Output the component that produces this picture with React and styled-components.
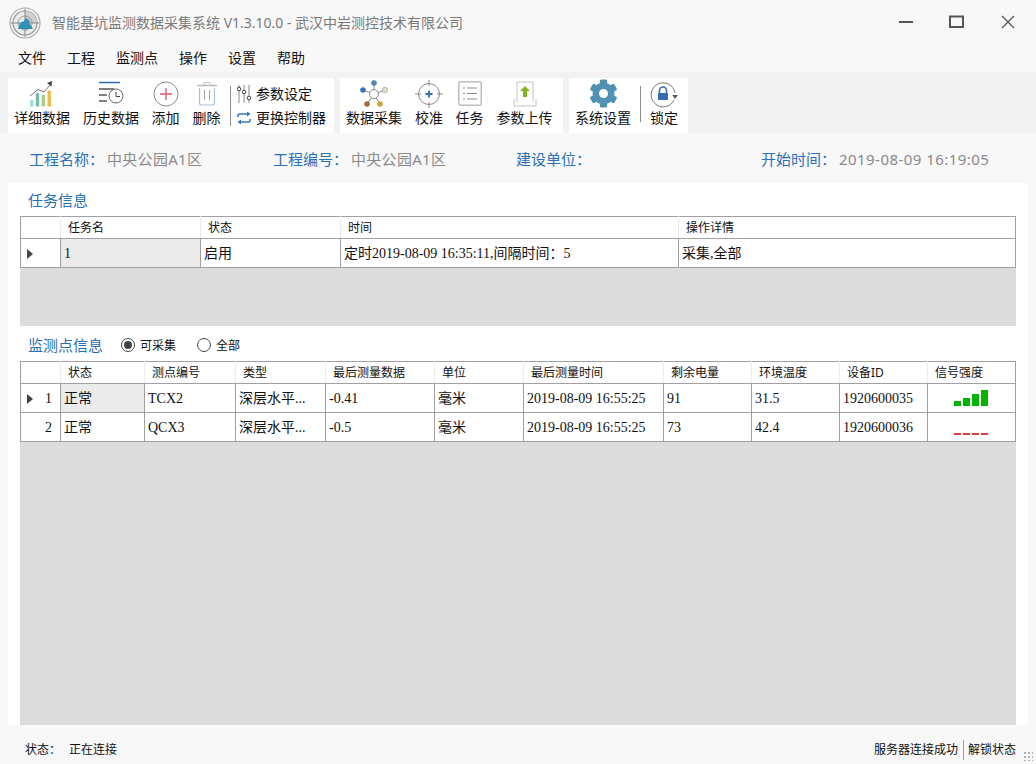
import React from 'react';
import styled, { createGlobalStyle } from 'styled-components';
import { FaCog } from 'react-icons/fa';

const GlobalStyle = createGlobalStyle`
    html, body {
        margin: 0;
        padding: 0;
        background: #f8f8f8;
    }
    * {
        box-sizing: border-box;
    }
`

const UI_FONT = `"Noto Sans", "Noto Sans CJK SC", sans-serif`;
const CELL_FONT = `"Liberation Serif", "Noto Sans CJK SC", serif`;

const Window = styled.div`
    width: 1036px;
    height: 764px;
    display: flex;
    flex-direction: column;
    overflow: hidden;
    background: #f8f8f8;
    font-family: ${UI_FONT};
    color: #111;
`

const TitleBar = styled.div`
    height: 44px;
    flex: none;
    display: flex;
    align-items: center;
    padding: 0 0 0 9px;
`

const LogoBox = styled.div`
    display: flex;
    margin-top: 2px;
`

const TitleText = styled.div`
    flex: 1;
    margin: 2px 0 0 11px;
    font-size: 14px;
    color: #7a7a7a;
    line-height: 20px;
`

const WindowButton = styled.div`
    width: ${props => props.$width}px;
    height: 44px;
    display: flex;
    align-items: center;
    justify-content: center;
    margin-right: ${props => props.$last ? '3px' : '0'};
`

const MenuBar = styled.div`
    height: 28px;
    flex: none;
    display: flex;
    padding: 0 0 2px 18px;
    gap: 21px;
    align-items: center;
    font-size: 14px;
`

const ToolStrip = styled.div`
    height: 61px;
    flex: none;
    background: #f2f2f2;
    display: flex;
    gap: 6px;
    padding: 6px 8px 0;
`

const ToolGroup = styled.div`
    width: ${props => props.$width}px;
    height: 55px;
    background: #fff;
    display: flex;
    padding-left: ${props => props.$pad || 0}px;
`

const ToolButton = styled.div`
    width: ${props => props.$width}px;
    flex: none;
    display: flex;
    flex-direction: column;
    align-items: center;
    font-size: 14px;
    line-height: 18px;
    white-space: nowrap;
`

const ToolIcon = styled.div`
    height: 31px;
    display: flex;
    align-items: center;
    justify-content: center;
`

const ToolSep = styled.div`
    width: 1px;
    height: ${props => props.$h || 40}px;
    background: #8a8a8a;
    margin: 8px ${props => props.$right}px 0 ${props => props.$left}px;
`

const SideTools = styled.div`
    display: flex;
    flex-direction: column;
    gap: 4px;
    padding-top: 6px;
    font-size: 14px;
`

const SideTool = styled.div`
    display: flex;
    align-items: center;
    gap: 5px;
    height: 20px;
    line-height: 16px;
    white-space: nowrap;
`

const InfoRow = styled.div`
    height: 50px;
    flex: none;
    display: grid;
    grid-template-columns: 244px 243px 245px auto;
    padding: 1px 0 0 29px;
    align-items: center;
    font-size: 15px;
    line-height: 20px;
`

const InfoItem = styled.div`
    display: flex;
    white-space: nowrap;
`

const InfoLabel = styled.span`
    width: 78px;
    color: #2b70b4;
`

const InfoValue = styled.span`
    color: #8a8a8a;
    letter-spacing: ${props => props.$spaced ? '0.45px' : '0.3px'};
`

const Panel = styled.div`
    flex: 1;
    margin: 0 8px;
    padding: 0 12px;
    background: #fff;
    display: flex;
    flex-direction: column;
`

const SectionHead = styled.div`
    height: ${props => props.$height}px;
    flex: none;
    display: flex;
    align-items: center;
    padding: ${props => props.$top || 0}px 0 0 8px;
    font-size: 12px;
`

const SectionTitle = styled.span`
    font-size: 15px;
    color: #2b70b4;
    margin-right: 18px;
`

const Radio = styled.span`
    width: 14px;
    height: 14px;
    border-radius: 50%;
    border: 1px solid #444;
    display: flex;
    align-items: center;
    justify-content: center;
    margin-right: 5px;
    &::after {
        content: "";
        width: 8px;
        height: 8px;
        border-radius: 50%;
        background: ${props => props.$on ? '#444' : 'transparent'};
    }
`

const RadioLabel = styled.span`
    margin-right: ${props => props.$gap || 0}px;
`

const GridArea = styled.div`
    flex: ${props => props.$grow ? 1 : 'none'};
    height: ${props => props.$height ? props.$height + 'px' : 'auto'};
    background: #dcdcdc;
`

const Table = styled.table`
    width: 995px;
    table-layout: fixed;
    border-collapse: collapse;
    background: #fff;
`

const HeadCell = styled.th`
    height: 22px;
    padding: 0 0 0 7px;
    border-top: 1px solid #a0a0a0;
    border-bottom: 1px solid #a0a0a0;
    border-left: 1px solid #ececec;
    border-right: 1px solid #ececec;
    font-family: ${UI_FONT};
    font-size: 12px;
    line-height: 16px;
    font-weight: 400;
    text-align: left;
    white-space: nowrap;
    &:first-child {
        border-left: 1px solid #a0a0a0;
    }
    &:last-child {
        border-right: 1px solid #a0a0a0;
    }
`

const Cell = styled.td`
    height: 29px;
    padding: 2px 0 0 3px;
    border: 1px solid #a0a0a0;
    font-family: ${CELL_FONT};
    font-size: 14px;
    line-height: 16px;
    white-space: nowrap;
    overflow: hidden;
    background: ${props => props.$current ? '#ebebeb' : '#fff'};
`

const RowHead = styled.td`
    height: 29px;
    padding: 2px 8px 0 7px;
    border: 1px solid #a0a0a0;
    font-family: ${CELL_FONT};
    font-size: 14px;
    line-height: 16px;
    text-align: right;
    position: relative;
`

const RowMarker = styled.span`
    position: absolute;
    left: 6px;
    top: 10px;
    border-left: 6px solid #444;
    border-top: 5px solid transparent;
    border-bottom: 5px solid transparent;
`

const Signal = styled.div`
    display: flex;
    align-items: flex-end;
    justify-content: center;
    gap: 2px;
    height: 17px;
    margin: -3px 0 0 -5px;
`

const Bar = styled.span`
    width: 7px;
    height: ${props => props.$h}px;
    background: ${props => props.$color};
`

const StatusBar = styled.div`
    height: 39px;
    flex: none;
    display: flex;
    align-items: center;
    padding: 11px 0 0 25px;
    font-size: 12px;
    line-height: 16px;
    position: relative;
`

const StatusLabel = styled.span`
    width: 44px;
`

const StatusText = styled.span`
    flex: 1;
`

const StatusDivider = styled.span`
    width: 1px;
    height: 20px;
    background: #a0a0a0;
    margin: 0 4px 0 5px;
`

const StatusEnd = styled.span`
    margin-right: 20px;
`

const Grip = styled.div`
    position: absolute;
    right: 3px;
    bottom: 3px;
    width: 10px;
    height: 10px;
    background-image: radial-gradient(#b0b0b0 1px, transparent 1.2px);
    background-size: 4px 4px;
`

function Logo() {
    return (
        <svg width="32" height="32" viewBox="0 0 32 32">
            <circle cx="16" cy="16" r="15" fill="#f2f2f2" stroke="#aaa" strokeWidth="1.2" />
            <circle cx="16" cy="16" r="12" fill="#ececec" stroke="#999" strokeWidth="1.2" />
            <path d="M16 4a12 12 0 0 1 12 12H16z" fill="#d0d0d0" />
            <circle cx="16" cy="16" r="7" fill="none" stroke="#999" />
            <path d="M16 2v28M2 16h28" stroke="#888" />
            <path d="M9 22l2-6 4-2 2-3 3 2 1 4 3 5z" fill="#2f93b5" />
        </svg>
    );
}

function ChartIcon() {
    return (
        <svg width="24" height="26" viewBox="0 0 24 26">
            <path d="M0 15l8-6.5 6 2.5 6-7" fill="none" stroke="#777" />
            <path d="M17 2l5-2-.5 5.5z" fill="#444" />
            <rect x="0" y="19" width="3.4" height="6.5" fill="#a5dbe5" />
            <rect x="5.8" y="12" width="3.4" height="13.5" fill="#7cb9b0" />
            <rect x="11.6" y="14" width="3.4" height="11.5" fill="#a9cf87" />
            <rect x="17.5" y="9.5" width="3.4" height="16" fill="#eebb4e" />
        </svg>
    );
}

function HistoryIcon() {
    return (
        <svg width="26" height="26" viewBox="0 0 26 26">
            <path d="M1 1.5h21" stroke="#2d6cb0" strokeWidth="1.5" />
            <path d="M1 8h15M1 14h8M1 20h8" stroke="#555" strokeWidth="1.5" />
            <circle cx="18" cy="15" r="7" fill="#fff" stroke="#666" />
            <path d="M18 11v4.5h4" fill="none" stroke="#444" />
        </svg>
    );
}

function AddIcon() {
    return (
        <svg width="26" height="26" viewBox="0 0 26 26">
            <circle cx="13" cy="13" r="12" fill="none" stroke="#8a8a8a" />
            <path d="M13 7v12M7 13h12" stroke="#d9566c" strokeWidth="1.3" />
        </svg>
    );
}

function TrashIcon() {
    return (
        <svg width="22" height="26" viewBox="0 0 22 26">
            <path d="M1 4.5h20" stroke="#b8b8b8" strokeWidth="1.5" />
            <path d="M8 4V1.5h6V4" fill="none" stroke="#c4c4c4" />
            <path d="M3.5 7v15a2 2 0 0 0 2 2h11a2 2 0 0 0 2-2V7" fill="none" stroke="#a9c4e0" strokeWidth="1.2" />
            <path d="M8.5 9v10M13.5 9v10" stroke="#a0a0a0" />
        </svg>
    );
}

function SlidersIcon() {
    return (
        <svg width="14" height="18" viewBox="0 0 14 18">
            <path d="M2 0v18M7 0v18M12 0v18" stroke="#888" />
            <circle cx="2" cy="4" r="1.8" fill="#fff" stroke="#444" />
            <circle cx="7" cy="7" r="1.8" fill="#fff" stroke="#444" />
            <circle cx="12" cy="13" r="1.8" fill="#fff" stroke="#444" />
        </svg>
    );
}

function SwapIcon() {
    return (
        <svg width="14" height="14" viewBox="0 0 14 14">
            <path d="M1 6V4.5A1.5 1.5 0 0 1 2.5 3H11" fill="none" stroke="#2f78c0" strokeWidth="1.6" />
            <path d="M10 0.5l3.5 2.5L10 5.5z" fill="#2f78c0" />
            <path d="M13 8v1.5a1.5 1.5 0 0 1-1.5 1.5H3" fill="none" stroke="#2f78c0" strokeWidth="1.6" />
            <path d="M4 8.5L0.5 11 4 13.5z" fill="#2f78c0" />
        </svg>
    );
}

function NodesIcon() {
    return (
        <svg width="28" height="28" viewBox="0 0 28 28">
            <path d="M14 5v9M3 10l11 4M25 10l-11 4M7 24l7-10M20 24l-6-10" stroke="#8a8a8a" />
            <circle cx="14" cy="14" r="4.5" fill="#fff" stroke="#8a8a8a" />
            <circle cx="14" cy="3" r="2.8" fill="#4f8aa5" />
            <circle cx="3" cy="10" r="2.8" fill="#3a72c0" />
            <circle cx="25" cy="10" r="2.8" fill="#e4dccb" stroke="#888" strokeWidth="0.5" />
            <circle cx="7" cy="24" r="2.8" fill="#a86a42" />
            <circle cx="20" cy="24" r="2.8" fill="#d0a434" />
        </svg>
    );
}

function TargetIcon() {
    return (
        <svg width="28" height="28" viewBox="0 0 28 28">
            <circle cx="14" cy="14" r="10.5" fill="none" stroke="#8a8a8a" />
            <path d="M14 0v6M14 22v6M0 14h6M22 14h6" stroke="#8a8a8a" />
            <path d="M14 10.5v7M10.5 14h7" stroke="#2f6fc0" strokeWidth="1.8" />
        </svg>
    );
}

function ListIcon() {
    return (
        <svg width="24" height="25" viewBox="0 0 24 25">
            <rect x="0.75" y="0.75" width="22.5" height="23.5" rx="2" fill="none" stroke="#bdbdbd" strokeWidth="1.5" />
            <path d="M9 7h10M9 12.5h10M9 18h10" stroke="#8a8a8a" />
            <path d="M5 7h2M5 12.5h2M5 18h2" stroke="#8a8a8a" />
        </svg>
    );
}

function UploadIcon() {
    return (
        <svg width="24" height="26" viewBox="0 0 24 26">
            <path d="M1 18v7h22v-7" fill="none" stroke="#c4c4c4" />
            <path d="M4 21V1h16v20" fill="#fff" stroke="#c4c4c4" />
            <path d="M12 5l5 5h-3v6h-4v-6H7z" fill="#7fb51e" />
        </svg>
    );
}

function LockIcon() {
    return (
        <svg width="28" height="28" viewBox="0 0 28 28">
            <path d="M25 13A12 12 0 1 0 24 20" fill="none" stroke="#777" />
            <path d="M22.2 15h5.6l-2.8 4z" fill="#555" />
            <path d="M9.5 13V10.5a3.5 3.5 0 0 1 7 0V13" fill="none" stroke="#3569b5" strokeWidth="1.6" />
            <rect x="8" y="13" width="10" height="7" rx="0.8" fill="#3569b5" />
        </svg>
    );
}

const menus = ['文件', '工程', '监测点', '操作', '设置', '帮助'];

const taskCols = [40, 140, 140, 338, 337];
const taskHeads = ['', '任务名', '状态', '时间', '操作详情'];

const pointCols = [40, 84, 91, 90, 109, 89, 140, 88, 88, 88, 88];
const pointHeads = ['', '状态', '测点编号', '类型', '最后测量数据', '单位', '最后测量时间', '剩余电量', '环境温度', '设备ID', '信号强度'];
const points = [
    { no: 1, state: '正常', code: 'TCX2', type: '深层水平...', value: '-0.41', time: '2019-08-09 16:55:25', power: '91', temp: '31.5', id: '1920600035', good: true },
    { no: 2, state: '正常', code: 'QCX3', type: '深层水平...', value: '-0.5', time: '2019-08-09 16:55:25', power: '73', temp: '42.4', id: '1920600036', good: false },
];

function Columns({ widths }) {
    return (
        <colgroup>
            {widths.map((w, i) => <col key={i} width={w} />)}
        </colgroup>
    );
}

function SignalBars({ good }) {
    if (good) {
        return (
            <Signal>
                {[5, 8, 12, 16].map(h => <Bar key={h} $h={h} $color="#00b400" />)}
            </Signal>
        );
    }
    return (
        <Signal>
            {[0, 1, 2, 3].map(i => <Bar key={i} $h={2} $color="#e2403c" />)}
        </Signal>
    );
}

function App() {
    return (
        <Window>
            <GlobalStyle />
            <TitleBar>
                <LogoBox><Logo /></LogoBox>
                <TitleText>智能基坑监测数据采集系统 V1.3.10.0 - 武汉中岩测控技术有限公司</TitleText>
                <WindowButton $width={49}>
                    <svg width="16" height="16" viewBox="0 0 16 16"><path d="M1 8h14" stroke="#555" strokeWidth="2" /></svg>
                </WindowButton>
                <WindowButton $width={53}>
                    <svg width="16" height="14" viewBox="0 0 16 14"><rect x="1" y="1.5" width="13" height="10.5" fill="none" stroke="#555" strokeWidth="2" /></svg>
                </WindowButton>
                <WindowButton $width={50} $last>
                    <svg width="14" height="14" viewBox="0 0 14 14"><path d="M1 1l12 12M13 1L1 13" stroke="#555" strokeWidth="1.3" /></svg>
                </WindowButton>
            </TitleBar>
            <MenuBar>
                {menus.map(m => <span key={m}>{m}</span>)}
            </MenuBar>
            <ToolStrip>
                <ToolGroup $width={326}>
                    <ToolButton $width={68}><ToolIcon><ChartIcon /></ToolIcon>详细数据</ToolButton>
                    <ToolButton $width={70}><ToolIcon><HistoryIcon /></ToolIcon>历史数据</ToolButton>
                    <ToolButton $width={39}><ToolIcon><AddIcon /></ToolIcon>添加</ToolButton>
                    <ToolButton $width={43}><ToolIcon><TrashIcon /></ToolIcon>删除</ToolButton>
                    <ToolSep $left={2} $right={6} />
                    <SideTools>
                        <SideTool><SlidersIcon />参数设定</SideTool>
                        <SideTool><SwapIcon />更换控制器</SideTool>
                    </SideTools>
                </ToolGroup>
                <ToolGroup $width={223} $pad={5}>
                    <ToolButton $width={58}><ToolIcon><NodesIcon /></ToolIcon>数据采集</ToolButton>
                    <ToolButton $width={52}><ToolIcon><TargetIcon /></ToolIcon>校准</ToolButton>
                    <ToolButton $width={29}><ToolIcon><ListIcon /></ToolIcon>任务</ToolButton>
                    <ToolButton $width={81}><ToolIcon><UploadIcon /></ToolIcon>参数上传</ToolButton>
                </ToolGroup>
                <ToolGroup $width={119} $pad={5}>
                    <ToolButton $width={58}><ToolIcon><FaCog size={29} color="#4f92b3" /></ToolIcon>系统设置</ToolButton>
                    <ToolSep $left={8} $right={8} $h={36} />
                    <ToolButton $width={30}><ToolIcon><LockIcon /></ToolIcon>锁定</ToolButton>
                </ToolGroup>
            </ToolStrip>
            <InfoRow>
                <InfoItem><InfoLabel>工程名称：</InfoLabel><InfoValue>中央公园A1区</InfoValue></InfoItem>
                <InfoItem><InfoLabel>工程编号：</InfoLabel><InfoValue>中央公园A1区</InfoValue></InfoItem>
                <InfoItem><InfoLabel>建设单位：</InfoLabel><InfoValue></InfoValue></InfoItem>
                <InfoItem><InfoLabel>开始时间：</InfoLabel><InfoValue $spaced>2019-08-09 16:19:05</InfoValue></InfoItem>
            </InfoRow>
            <Panel>
                <SectionHead $height={33}><SectionTitle>任务信息</SectionTitle></SectionHead>
                <GridArea $height={110}>
                    <Table>
                        <Columns widths={taskCols} />
                        <thead>
                            <tr>{taskHeads.map((h, i) => <HeadCell key={i}>{h}</HeadCell>)}</tr>
                        </thead>
                        <tbody>
                            <tr>
                                <RowHead><RowMarker /></RowHead>
                                <Cell $current>1</Cell>
                                <Cell>启用</Cell>
                                <Cell>定时2019-08-09 16:35:11,间隔时间：5</Cell>
                                <Cell>采集,全部</Cell>
                            </tr>
                        </tbody>
                    </Table>
                </GridArea>
                <SectionHead $height={35} $top={2}>
                    <SectionTitle>监测点信息</SectionTitle>
                    <Radio $on />
                    <RadioLabel $gap={21}>可采集</RadioLabel>
                    <Radio />
                    <RadioLabel>全部</RadioLabel>
                </SectionHead>
                <GridArea $grow>
                    <Table>
                        <Columns widths={pointCols} />
                        <thead>
                            <tr>{pointHeads.map((h, i) => <HeadCell key={i}>{h}</HeadCell>)}</tr>
                        </thead>
                        <tbody>
                            {points.map((p, i) => (
                                <tr key={p.no}>
                                    <RowHead>{i === 0 && <RowMarker />}{p.no}</RowHead>
                                    <Cell $current={i === 0}>{p.state}</Cell>
                                    <Cell>{p.code}</Cell>
                                    <Cell>{p.type}</Cell>
                                    <Cell>{p.value}</Cell>
                                    <Cell>毫米</Cell>
                                    <Cell>{p.time}</Cell>
                                    <Cell>{p.power}</Cell>
                                    <Cell>{p.temp}</Cell>
                                    <Cell>{p.id}</Cell>
                                    <Cell><SignalBars good={p.good} /></Cell>
                                </tr>
                            ))}
                        </tbody>
                    </Table>
                </GridArea>
            </Panel>
            <StatusBar>
                <StatusLabel>状态：</StatusLabel>
                <StatusText>正在连接</StatusText>
                <span>服务器连接成功</span>
                <StatusDivider />
                <StatusEnd>解锁状态</StatusEnd>
                <Grip />
            </StatusBar>
        </Window>
    );
}

export default App;
